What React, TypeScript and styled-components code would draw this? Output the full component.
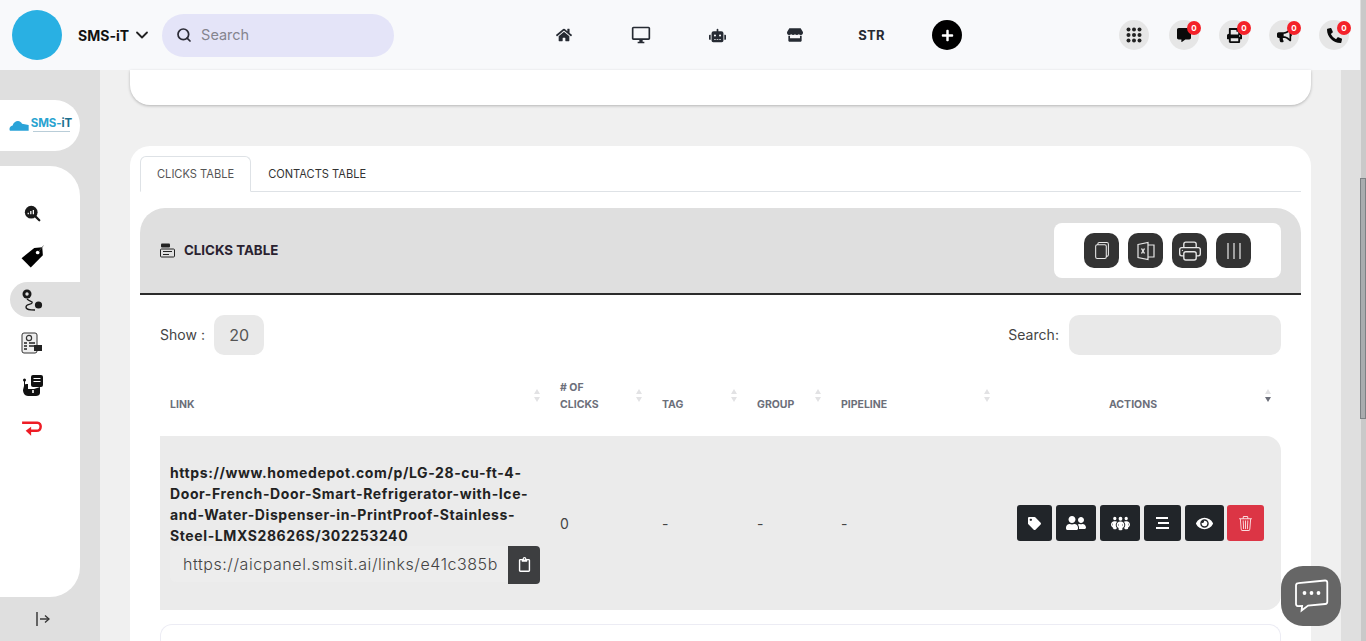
import React from 'react';
import styled, { createGlobalStyle } from 'styled-components';
import {
    FaHome,
    FaRobot,
    FaStore,
    FaPlus,
    FaPrint,
    FaBullhorn,
    FaCommentAlt,
    FaPhoneAlt,
    FaTag,
    FaUserFriends,
    FaEye,
    FaRegClipboard,
} from 'react-icons/fa';
import { FaPeopleGroup } from 'react-icons/fa6';
import { FiChevronDown, FiSearch } from 'react-icons/fi';
import { MdOutlineDesktopWindows } from 'react-icons/md';
import { BsFiles, BsPrinter, BsTrash3 } from 'react-icons/bs';

const SANS = '"Inter", "Open Sans", "Liberation Sans", sans-serif';

const GlobalStyle = createGlobalStyle`
    html, body {
        margin: 0;
        padding: 0;
        height: 100%;
        overflow: hidden;
        background: #dfdfdf;
        font-family: ${SANS};
    }
    * {
        box-sizing: border-box;
    }
`;

const Page = styled.div`
    display: flex;
    height: 641px;
    width: 1366px;
    overflow: hidden;
`;

const Viewport = styled.div`
    width: 1360px;
    display: flex;
    flex-direction: column;
`;

const ScrollTrack = styled.div`
    width: 6px;
    padding-top: 178px;
    background: linear-gradient(to right, #dfdfdf 1px, #c9c9c9 1px);
`;

const ScrollThumb = styled.div`
    height: 241px;
    background: #a9acae;
    border: 1px solid #7c8184;
`;

const TopBar = styled.header`
    height: 70px;
    flex: none;
    background: #f8f9fb;
    display: grid;
    grid-template-columns: 520px 1fr 260px;
    align-items: center;
    padding: 0 11px 0 12px;
`;

const BrandArea = styled.div`
    display: flex;
    align-items: center;
`;

const Avatar = styled.div`
    width: 50px;
    height: 50px;
    border-radius: 50%;
    background: #29b0e3;
`;

const BrandName = styled.span`
    margin-left: 16px;
    font-size: 14px;
    font-weight: 700;
    color: #111;
`;

const BrandChevron = styled(FiChevronDown)`
    margin-left: 3px;
    width: 20px;
    height: 20px;
    stroke-width: 2.2;
    color: #222;
`;

const SearchPill = styled.div`
    margin-left: 10px;
    width: 232px;
    height: 43px;
    border-radius: 22px;
    background: #e4e4f8;
    display: flex;
    align-items: center;
    gap: 9px;
    padding-left: 14px;
    color: #2b2b36;
    font-size: 16px;
`;

const SearchText = styled.span`
    color: #85858f;
    font-size: 14.5px;
    padding-bottom: 1px;
`;

const NavStrip = styled.nav`
    display: flex;
    align-items: center;
    margin-left: -7px;
`;

const NavItem = styled.div`
    width: 77px;
    display: flex;
    justify-content: center;
    color: #262b33;
    font-size: 13px;
    font-weight: 700;
    letter-spacing: 0.2px;
`;

const PlusButton = styled.button`
    width: 30px;
    height: 30px;
    margin-left: 22px;
    padding: 0;
    border: none;
    border-radius: 50%;
    background: #000;
    color: #fff;
    display: flex;
    align-items: center;
    justify-content: center;
    font-size: 13px;
`;

const NotifyStrip = styled.div`
    display: flex;
    gap: 20px;
    justify-content: flex-end;
`;

const NotifyButton = styled.div`
    position: relative;
    width: 30px;
    height: 30px;
    border-radius: 50%;
    background: #e6e6e6;
    display: flex;
    align-items: center;
    justify-content: center;
    color: #0a0a0a;
    font-size: 15px;
`;

const NotifyBadge = styled.span`
    position: absolute;
    top: 1px;
    right: -2px;
    width: 14px;
    height: 14px;
    border-radius: 50%;
    background: #f4222a;
    color: #fff;
    font-size: 8px;
    font-weight: 700;
    line-height: 14px;
    text-align: center;
`;

const Body = styled.div`
    flex: 1;
    min-height: 0;
    display: flex;
`;

const Rail = styled.aside`
    width: 100px;
    flex: none;
    background: #dfdfdf;
    padding-top: 30px;
    display: flex;
    flex-direction: column;
`;

const LogoPill = styled.div`
    width: 80px;
    height: 51px;
    background: #fff;
    border-radius: 0 25px 25px 0;
    display: flex;
    align-items: center;
    justify-content: center;
    gap: 1px;
    padding-left: 1px;
`;

const LogoWords = styled.div`
    display: flex;
    flex-direction: column;
    margin-top: -2px;
`;

const LogoText = styled.span`
    font-size: 11.5px;
    line-height: 12px;
    font-weight: 700;
    color: #2aa3d0;
    letter-spacing: -0.1px;
`;

const LogoAccent = styled.span`
    color: #1d6f8e;
`;

const LogoTagline = styled.span`
    height: 1px;
    margin: 2px 2px 0;
    background: #b9cdd8;
`;

const RailPanel = styled.div`
    margin-top: 15px;
    width: 80px;
    height: 431px;
    background: #fff;
    border-radius: 0 30px 30px 0;
    padding: 30px 0 0 10px;
    display: flex;
    flex-direction: column;
`;

const RailItem = styled.div<{ $active?: boolean }>`
    height: 35px;
    margin-bottom: 8px;
    padding-left: 10px;
    display: flex;
    align-items: center;
    border-radius: 18px 0 0 18px;
    background: ${(props) => (props.$active ? '#dfdfdf' : 'transparent')};
`;

const RailIcon = styled.div`
    width: 24px;
    display: flex;
    justify-content: center;
`;

const RailFooter = styled.div`
    display: flex;
    justify-content: center;
    width: 85px;
    margin-top: 15px;
    color: #222;
`;

const Main = styled.main`
    flex: 1;
    min-width: 0;
    background: #f0f0f0;
    padding: 0 30px;
    margin-right: 19px;
`;

const TopCard = styled.section`
    height: 35px;
    background: #fff;
    border-radius: 0 0 20px 20px;
    box-shadow: 0 1px 3px rgba(0, 0, 0, 0.25);
`;

const TableCard = styled.section`
    margin-top: 41px;
    height: 600px;
    background: #fff;
    border-radius: 20px;
    padding: 10px;
`;

const Tabs = styled.div`
    display: flex;
    height: 36px;
    border-bottom: 1px solid #dee2e6;
`;

const Tab = styled.div<{ $active?: boolean }>`
    height: ${(props) => (props.$active ? '36px' : '35px')};
    padding: 0 16px;
    display: flex;
    align-items: center;
    font-size: 11.1px;
    color: ${(props) => (props.$active ? '#555' : '#333')};
    background: ${(props) => (props.$active ? '#fff' : 'transparent')};
    border: 1px solid ${(props) => (props.$active ? '#dee2e6' : 'transparent')};
    border-bottom-color: ${(props) => (props.$active ? '#fff' : 'transparent')};
    border-radius: 6px 6px 0 0;
`;

const PanelHead = styled.div`
    margin-top: 16px;
    height: 87px;
    background: #dfdfdf;
    border-bottom: 2px solid #2b2b2b;
    border-radius: 25px 25px 0 0;
    display: flex;
    align-items: center;
    justify-content: space-between;
    padding: 0 20px;
`;

const PanelTitle = styled.div`
    display: flex;
    align-items: center;
    gap: 9px;
    padding-bottom: 1px;
    font-size: 13.3px;
    font-weight: 700;
    color: #2a2230;
`;

const Toolbar = styled.div`
    width: 227px;
    height: 55px;
    background: #fff;
    border-radius: 8px;
    display: flex;
    align-items: center;
    justify-content: center;
    gap: 9px;
`;

const ToolButton = styled.div<{ $size?: number }>`
    width: 35px;
    height: 35px;
    border-radius: 10px;
    background: #333;
    color: #e8e8e8;
    display: flex;
    align-items: center;
    justify-content: center;
    font-size: ${(props) => props.$size ?? 20}px;
`;

const PanelBody = styled.div`
    padding: 20px 20px 0;
`;

const FilterRow = styled.div`
    display: flex;
    align-items: center;
    justify-content: space-between;
    font-size: 14px;
    color: #444;
`;

const FilterGroup = styled.div`
    display: flex;
    align-items: center;
    gap: 10px;
`;

const FilterLabel = styled.span`
    padding-bottom: 2px;
    letter-spacing: 0.05px;
`;

const ShowBox = styled.div`
    width: 50px;
    height: 40px;
    margin-left: -1px;
    background: #e9e9e9;
    border-radius: 10px;
    display: flex;
    align-items: center;
    justify-content: center;
    font-size: 16px;
    color: #555;
`;

const SearchBox = styled.div`
    width: 212px;
    height: 40px;
    background: #e9e9e9;
    border-radius: 10px;
`;

const DataTable = styled.table`
    width: 1121px;
    margin-top: 15px;
    border-collapse: separate;
    border-spacing: 0;
    table-layout: fixed;
`;

const HeadCell = styled.th<{ $center?: boolean }>`
    position: relative;
    height: 66px;
    padding: 0 ${(props) => (props.$center ? '25px' : '10px')} 23px 10px;
    vertical-align: bottom;
    text-align: ${(props) => (props.$center ? 'center' : 'left')};
    font-size: 10.5px;
    line-height: 17px;
    font-weight: 700;
    color: #6c6f7a;
`;

const SortMark = styled.span<{ $active?: boolean }>`
    position: absolute;
    right: 10px;
    top: 19px;
    display: flex;
    flex-direction: column;
    gap: 3px;

    &::before,
    &::after {
        content: '';
        width: 0;
        height: 0;
        border-left: 3.5px solid transparent;
        border-right: 3.5px solid transparent;
    }

    &::before {
        border-bottom: 5px solid #e2e2e4;
    }

    &::after {
        border-top: 5px solid ${(props) => (props.$active ? '#6c6f7a' : '#e2e2e4')};
    }
`;

const DataCell = styled.td`
    height: 174px;
    padding: 0 10px;
    background: #ebebeb;
    font-size: 14px;
    color: #444;
    vertical-align: middle;

    &:last-child {
        border-radius: 0 15px 15px 0;
    }
`;

const LinkTitle = styled.div`
    font-size: 14px;
    line-height: 21px;
    font-weight: 700;
    letter-spacing: 0.6px;
    color: #222;
    overflow-wrap: anywhere;
`;

const CopyRow = styled.div`
    display: flex;
    margin-bottom: 1px;
`;

const CopyField = styled.div`
    width: 338px;
    height: 36px;
    padding: 0 11px 0 13px;
    background: #ededed;
    border-radius: 6px 0 0 6px;
`;

const CopyText = styled.div`
    font-size: 16px;
    font-weight: 300;
    line-height: 36px;
    letter-spacing: 0.55px;
    color: #444;
    white-space: nowrap;
    overflow: hidden;
`;

const CopyButton = styled.div`
    width: 32px;
    height: 38px;
    background: #3d3e40;
    border-radius: 0 4px 4px 0;
    color: #fff;
    display: flex;
    align-items: center;
    justify-content: center;
    font-size: 15px;
`;

const ActionRow = styled.div`
    display: flex;
    justify-content: flex-end;
    gap: 4px;
    padding-right: 7px;
`;

const ActionButton = styled.div<{ $width: number; $danger?: boolean }>`
    width: ${(props) => props.$width}px;
    height: 36px;
    margin-left: ${(props) => (props.$danger ? '-1px' : '0')};
    border-radius: 3px;
    background: ${(props) => (props.$danger ? '#dc3545' : '#212529')};
    color: ${(props) => (props.$danger ? '#fbdde0' : '#fff')};
    display: flex;
    align-items: center;
    justify-content: center;
    font-size: 15px;
`;

const NextRow = styled.div`
    margin-top: 14px;
    height: 40px;
    border: 1px solid #ececf4;
    border-bottom: none;
    border-radius: 12px 12px 0 0;
`;

const ChatBubble = styled.div`
    position: fixed;
    left: 1281px;
    top: 566px;
    width: 60px;
    height: 60px;
    border-radius: 22px;
    background: #666;
    display: flex;
    align-items: center;
    justify-content: center;
`;

const LogoCloud = () => (
    <svg width="21" height="13" viewBox="0 0 22 13">
        <path
            d="M1 12c-1.300-2.600.2-5 2.800-5.400C4.800 3.200 7.600 1.400 10.400 2c1.500.3 2.600 1.300 3.200 2.600l7 1.400v6z"
            fill="#2aa3d8"
        />
    </svg>
);

const AnalyticsIcon = () => (
    <svg width="17" height="17" viewBox="0 0 20 20">
        <circle cx="8.500" cy="8.500" r="7.500" fill="#1a1a1a" />
        <path d="M5 11V9M8 11V7M11 11V6" stroke="#fff" strokeWidth="1.500" />
        <path d="M14 14l4 4" stroke="#1a1a1a" strokeWidth="2.600" strokeLinecap="round" />
    </svg>
);

const PriceTagIcon = () => (
    <svg width="23" height="23" viewBox="1.500 1.500 20 20">
        <path d="M13 4l7-.5.500 7L10 21 2 13z" fill="#000" />
        <circle cx="16" cy="8" r="1.600" fill="#fff" />
        <path d="M17 7l4-5" stroke="#555" strokeWidth="0.600" />
    </svg>
);

const RouteIcon = () => (
    <svg width="23" height="24" viewBox="0 0 23 24">
        <circle cx="6" cy="6" r="4.500" fill="#1a1a1a" />
        <circle cx="6" cy="6" r="1.700" fill="#dfdfdf" />
        <path
            d="M6 11c3 3 6 2 5 4s-6 1-6 4 4 3 9 3"
            fill="none"
            stroke="#1a1a1a"
            strokeWidth="1.300"
        />
        <circle cx="17.500" cy="17" r="3.600" fill="#1a1a1a" />
    </svg>
);

const ChecklistIcon = () => (
    <svg width="22" height="22" viewBox="0 0 22 22">
        <rect x="1" y="1" width="15" height="20" rx="2" fill="#eee" stroke="#333" strokeWidth="1" />
        <circle cx="8" cy="6" r="2.600" fill="none" stroke="#333" strokeWidth="1.200" />
        <path d="M3 11h3M3 14h3M3 17h3M8 11h6M8 14h6" stroke="#222" strokeWidth="1.400" />
        <rect x="13" y="13" width="8" height="6" fill="#222" />
    </svg>
);

const AgentIcon = () => (
    <svg width="23" height="23" viewBox="0 0 23 23">
        <rect x="10" y="1" width="12" height="12" rx="2" fill="#111" />
        <path d="M12.500 4.500h7M12.500 7.500h7" stroke="#fff" strokeWidth="1.200" />
        <path d="M3 12c0-2 2-2 4-2v5h6l3-1 3-1v6c0 2-2 3-4 3H7c-3 0-5-3-5-6z" fill="#111" />
        <circle cx="3.500" cy="6" r="1.500" fill="#111" />
        <path d="M3.500 6v6" stroke="#111" strokeWidth="1" />
        <path d="M12 16v3" stroke="#fff" strokeWidth="1.600" />
    </svg>
);

const ReturnIcon = () => (
    <svg width="22" height="18" viewBox="0 0 24 20">
        <path
            d="M1 3h17c5 0 5 9-1 9h-7"
            fill="none"
            stroke="#ee1c25"
            strokeWidth="2.800"
        />
        <path d="M11 7.500v10L5 12z" fill="#ee1c25" />
    </svg>
);

const CollapseIcon = () => (
    <svg width="14" height="14" viewBox="0 0 14 14">
        <path d="M1 0v14" stroke="#111" strokeWidth="1.200" />
        <path d="M4 7h8" stroke="#444" strokeWidth="1.600" />
        <path d="M9 3.500L13 7l-4 3.500" fill="none" stroke="#333" strokeWidth="1.300" />
    </svg>
);

const DotsIcon = () => (
    <svg width="16" height="16" viewBox="0 0 16 16" fill="#222">
        {[2.5, 8, 13.5].flatMap((y) =>
            [2.5, 8, 13.5].map((x) => <circle key={`${x}-${y}`} cx={x} cy={y} r="2" />),
        )}
    </svg>
);

const TableIcon = () => (
    <svg width="15" height="15" viewBox="0 0 15 15">
        <rect x="1" y="0.500" width="9" height="4" rx="1" fill="#222" />
        <rect x="0.500" y="6" width="14" height="8" rx="1" fill="#dfdfdf" stroke="#222" />
        <path d="M3 8.500h9M3 11.500h6" stroke="#222" />
    </svg>
);

const ExcelIcon = () => (
    <svg width="20" height="20" viewBox="0 0 20 20" fill="none" stroke="#e8e8e8" strokeWidth="1.200">
        <path d="M2 3.500L12 1.500v17L2 16.500zM12 4h6v12h-6" />
        <path d="M5.500 7.500l3 5M8.500 7.500l-3 5" strokeWidth="1.400" />
    </svg>
);

const ColumnsIcon = () => (
    <svg width="18" height="18" viewBox="0 0 18 18" stroke="#e8e8e8" strokeWidth="1.200">
        <path d="M3 1v16M9 1v16M15 1v16" />
    </svg>
);

const ThreeLinesIcon = () => (
    <svg width="15" height="14" viewBox="0 0 15 14" stroke="#fff" strokeWidth="2">
        <path d="M1 2h12M3 7h11M1 12h13" />
    </svg>
);

const ChatIcon = () => (
    <svg width="36" height="34" viewBox="0 0 36 34" fill="none">
        <path
            d="M3 6.500c0-1.500.8-2.300 2.300-2.400L32 1.500c1.400-.1 2.300.7 2.300 2.200v19c0 1.400-.8 2.200-2.200 2.300l-17 1.500-6.500 5 .5-4.600-4.300.2C3.600 27 3 26.200 3 24.800z"
            stroke="#fff"
            strokeWidth="1.800"
        />
        <circle cx="11.500" cy="14" r="1.900" fill="#fff" />
        <circle cx="18.500" cy="14" r="1.900" fill="#fff" />
        <circle cx="25.500" cy="14" r="1.900" fill="#fff" />
    </svg>
);

const NAV_ICONS = [
    <FaHome key="home" size={16} />,
    <MdOutlineDesktopWindows key="desktop" size={20} />,
    <FaRobot key="robot" size={17} />,
    <FaStore key="store" size={16} />,
    <span key="str">STR</span>,
];

const NOTIFY_ICONS = [
    <FaCommentAlt key="chat" size={14} />,
    <FaPrint key="print" size={15} />,
    <FaBullhorn key="horn" size={15} />,
    <FaPhoneAlt key="phone" size={15} />,
];

const RAIL_ICONS = [
    <AnalyticsIcon key="analytics" />,
    <PriceTagIcon key="tag" />,
    <RouteIcon key="route" />,
    <ChecklistIcon key="checklist" />,
    <AgentIcon key="agent" />,
    <ReturnIcon key="return" />,
];

const ACTIONS = [
    { width: 35, icon: <FaTag size={13} /> },
    { width: 40, icon: <FaUserFriends size={20} /> },
    { width: 40, icon: <FaPeopleGroup size={19} /> },
    { width: 37, icon: <ThreeLinesIcon /> },
    { width: 39, icon: <FaEye size={17} /> },
];

const COLUMNS = [
    { label: 'LINK', width: 390 },
    { label: <>#&nbsp;OF<br />CLICKS</>, width: 102 },
    { label: 'TAG', width: 95 },
    { label: 'GROUP', width: 84 },
    { label: 'PIPELINE', width: 169 },
];

const App = () => {
    return (
        <Page>
            <GlobalStyle />
            <Viewport>
                <TopBar>
                    <BrandArea>
                        <Avatar />
                        <BrandName>SMS-iT</BrandName>
                        <BrandChevron />
                        <SearchPill>
                            <FiSearch strokeWidth={2.6} />
                            <SearchText>Search</SearchText>
                        </SearchPill>
                    </BrandArea>
                    <NavStrip>
                        {NAV_ICONS.map((icon, index) => (
                            <NavItem key={index}>{icon}</NavItem>
                        ))}
                        <PlusButton>
                            <FaPlus />
                        </PlusButton>
                    </NavStrip>
                    <NotifyStrip>
                        <NotifyButton>
                            <DotsIcon />
                        </NotifyButton>
                        {NOTIFY_ICONS.map((icon, index) => (
                            <NotifyButton key={index}>
                                {icon}
                                <NotifyBadge>0</NotifyBadge>
                            </NotifyButton>
                        ))}
                    </NotifyStrip>
                </TopBar>
                <Body>
                    <Rail>
                        <LogoPill>
                            <LogoCloud />
                            <LogoWords>
                                <LogoText>SMS-<LogoAccent>iT</LogoAccent></LogoText>
                                <LogoTagline />
                            </LogoWords>
                        </LogoPill>
                        <RailPanel>
                            {RAIL_ICONS.map((icon, index) => (
                                <RailItem key={index} $active={index === 2}>
                                    <RailIcon>{icon}</RailIcon>
                                </RailItem>
                            ))}
                        </RailPanel>
                        <RailFooter>
                            <CollapseIcon />
                        </RailFooter>
                    </Rail>
                    <Main>
                        <TopCard />
                        <TableCard>
                            <Tabs>
                                <Tab $active>CLICKS TABLE</Tab>
                                <Tab>CONTACTS TABLE</Tab>
                            </Tabs>
                            <PanelHead>
                                <PanelTitle>
                                    <TableIcon />
                                    CLICKS TABLE
                                </PanelTitle>
                                <Toolbar>
                                    <ToolButton $size={17}><BsFiles /></ToolButton>
                                    <ToolButton><ExcelIcon /></ToolButton>
                                    <ToolButton $size={22}><BsPrinter /></ToolButton>
                                    <ToolButton><ColumnsIcon /></ToolButton>
                                </Toolbar>
                            </PanelHead>
                            <PanelBody>
                                <FilterRow>
                                    <FilterGroup>
                                        <FilterLabel>Show :</FilterLabel>
                                        <ShowBox>20</ShowBox>
                                    </FilterGroup>
                                    <FilterGroup>
                                        <FilterLabel>Search:</FilterLabel>
                                        <SearchBox />
                                    </FilterGroup>
                                </FilterRow>
                                <DataTable>
                                    <colgroup>
                                        {COLUMNS.map((column, index) => (
                                            <col key={index} style={{ width: column.width }} />
                                        ))}
                                        <col />
                                    </colgroup>
                                    <thead>
                                        <tr>
                                            {COLUMNS.map((column, index) => (
                                                <HeadCell key={index}>
                                                    {column.label}
                                                    <SortMark />
                                                </HeadCell>
                                            ))}
                                            <HeadCell $center>
                                                ACTIONS
                                                <SortMark $active />
                                            </HeadCell>
                                        </tr>
                                    </thead>
                                    <tbody>
                                        <tr>
                                            <DataCell>
                                                <LinkTitle>
                                                    https://www.homedepot.com/p/LG-28-cu-ft-4-Door-French-Door-Smart-Refrigerator-with-Ice-and-Water-Dispenser-in-PrintProof-Stainless-Steel-LMXS28626S/302253240
                                                </LinkTitle>
                                                <CopyRow>
                                                    <CopyField>
                                                        <CopyText>https://aicpanel.smsit.ai/links/e41c385b9f2a</CopyText>
                                                    </CopyField>
                                                    <CopyButton><FaRegClipboard /></CopyButton>
                                                </CopyRow>
                                            </DataCell>
                                            <DataCell>0</DataCell>
                                            <DataCell>-</DataCell>
                                            <DataCell>-</DataCell>
                                            <DataCell>-</DataCell>
                                            <DataCell>
                                                <ActionRow>
                                                    {ACTIONS.map((action, index) => (
                                                        <ActionButton key={index} $width={action.width}>
                                                            {action.icon}
                                                        </ActionButton>
                                                    ))}
                                                    <ActionButton $width={37} $danger>
                                                        <BsTrash3 size={15} />
                                                    </ActionButton>
                                                </ActionRow>
                                            </DataCell>
                                        </tr>
                                    </tbody>
                                </DataTable>
                                <NextRow />
                            </PanelBody>
                        </TableCard>
                    </Main>
                </Body>
            </Viewport>
            <ScrollTrack>
                <ScrollThumb />
            </ScrollTrack>
            <ChatBubble>
                <ChatIcon />
            </ChatBubble>
        </Page>
    );
};

export default App;
